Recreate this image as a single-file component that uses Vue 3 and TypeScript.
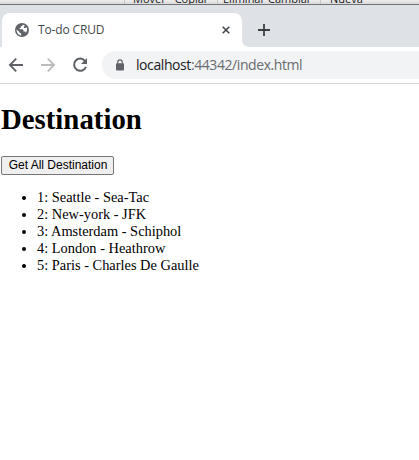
<script setup lang="ts">
interface Destination {
  id: number
  city: string
  airport: string
}

const destinations: Destination[] = [
  { id: 1, city: 'Seattle', airport: 'Sea-Tac' },
  { id: 2, city: 'New-york', airport: 'JFK' },
  { id: 3, city: 'Amsterdam', airport: 'Schiphol' },
  { id: 4, city: 'London', airport: 'Heathrow' },
  { id: 5, city: 'Paris', airport: 'Charles De Gaulle' },
]
</script>

<template>
  <div class="window">
    <div class="ribbon">
      <div class="group first"></div>
      <div class="group second"><span>Mover</span><span>Copiar</span></div>
      <div class="group third"><span>Eliminar</span><span>Cambiar</span></div>
      <div class="group fourth"><span>Nueva</span></div>
    </div>
    <div class="tabs">
      <div class="tab">
        <svg class="globe" viewBox="0 0 14 14">
          <circle cx="7" cy="7" r="7" fill="#5f6368" />
          <path d="M7.8 1.7 C7.6 2.6 7.2 3.1 6 3.2 L5.9 4.6 L4.6 5.1 L4.7 6.2 L7.6 6.3 L8.5 7.2 L8.5 8.4 L10.2 8.6 L10.8 9.7 C12.4 7.9 12.5 5.5 11.5 4 L10.6 5 L8.9 4.9 L8.8 3.7 L10 2.7 C9.3 2 8.5 1.8 7.8 1.7Z M1.6 6.5 L4.5 9 L4.6 10 L6 10.2 L6.1 12.4 C3.4 12 1.4 9.6 1.6 6.5Z" fill="#fff" />
        </svg>
        <span class="title">To-do CRUD</span>
        <svg class="close" viewBox="0 0 8 8"><path d="M.7 .7L7.3 7.3M7.3 .7L.7 7.3" stroke="#45494d" stroke-width="1.6" /></svg>
      </div>
      <svg class="curve" viewBox="0 0 8 8"><path d="M0 0Q0 8 8 8H0Z" fill="#fff" /></svg>
      <svg class="plus" viewBox="0 0 12 12"><path d="M6 0V12M0 6H12" stroke="#3c4043" stroke-width="1.8" /></svg>
    </div>
    <div class="toolbar">
      <svg class="nav" viewBox="0 0 16 16"><path d="M15 8H2M8.2 1.7L1.9 8L8.2 14.3" fill="none" stroke="#5f6368" stroke-width="1.9" /></svg>
      <svg class="nav" viewBox="0 0 16 16"><path d="M1 8H14M7.8 1.7L14.1 8L7.8 14.3" fill="none" stroke="#babcbe" stroke-width="1.9" /></svg>
      <svg class="nav" viewBox="0 0 16 16">
        <path d="M13.2 4.2A6.1 6.1 0 1 0 13.9 9.8" fill="none" stroke="#5f6368" stroke-width="2" />
        <path d="M15 1V7H9Z" fill="#5f6368" />
      </svg>
      <div class="address">
        <svg class="lock" viewBox="0 0 8 12">
          <path d="M1.8 5V3A2.2 2.2 0 0 1 6.2 3V5" fill="none" stroke="#5f6368" stroke-width="1.2" />
          <rect y="4.3" width="8" height="7.2" rx="1" fill="#5f6368" />
        </svg>
        <span class="url">localhost<span class="path">:44342/index.html</span></span>
      </div>
    </div>
    <main>
      <h1>Destination</h1>
      <button type="button">Get All Destination</button>
      <ul>
        <li v-for="d in destinations" :key="d.id">{{ d.id }}: {{ d.city }} - {{ d.airport }}</li>
      </ul>
    </main>
  </div>
</template>

<style>
body {
  margin: 0;
  background: #fff;
}
</style>

<style scoped>
.window {
  height: 460px;
  overflow: hidden;
  background: #fff;
}
svg {
  display: block;
  flex: none;
}
.ribbon {
  box-sizing: border-box;
  height: 5px;
  display: flex;
  overflow: hidden;
  background: linear-gradient(#eeeeef, #d8d9da);
  border-bottom: 1px solid #707275;
  font: 11px/12px "Open Sans", sans-serif;
  color: #202020;
}
.group {
  box-sizing: border-box;
  display: flex;
  flex: none;
  height: 4px;
  border-right: 1px solid #c5c6c8;
}
.group span {
  display: block;
  margin-top: -7px;
  white-space: nowrap;
}
.first { width: 125px; }
.second { width: 93px; padding-left: 8px; gap: 9px; }
.third { width: 103px; padding-left: 5px; gap: 3px; }
.fourth { width: 98px; padding-left: 9px; border: 0; }
.tabs {
  box-sizing: border-box;
  height: 42px;
  padding: 8px 0 0 2px;
  display: flex;
  background: #dee1e6;
}
.tab {
  box-sizing: border-box;
  width: 240px;
  height: 34px;
  padding: 0 12px 0 13px;
  display: flex;
  align-items: center;
  background: #fff;
  border-radius: 8px 8px 0 0;
}
.globe { width: 14px; height: 14px; }
.title {
  margin-left: 9px;
  font: 12px/16px "Open Sans", sans-serif;
  letter-spacing: -.15px;
  color: #45494d;
}
.close { width: 8px; height: 8px; margin-left: auto; }
.curve { width: 8px; height: 8px; align-self: flex-end; }
.plus { width: 12px; height: 12px; margin: 11px 0 0 8px; }
.toolbar {
  box-sizing: border-box;
  height: 37px;
  padding: 4px 0 4px 8px;
  display: flex;
  align-items: center;
  background: #fff;
  border-bottom: 1px solid #d5d7da;
}
.nav { width: 16px; height: 16px; margin-right: 16px; }
.address {
  box-sizing: border-box;
  height: 28px;
  flex: 1;
  margin-left: -2px;
  padding-left: 14px;
  display: flex;
  align-items: center;
  background: #f1f3f4;
  border-radius: 14px 0 0 14px;
}
.lock { width: 8px; height: 12px; }
.url {
  margin-left: 12px;
  font: 14px/20px "Open Sans", sans-serif;
  letter-spacing: -.42px;
  color: #202124;
}
.path { color: #686c70; }
main {
  padding: 19px 0 0 1px;
  font: 14.4px/17px "Liberation Serif", serif;
  color: #000;
}
h1 {
  margin: 0 0 20px;
  font-size: 28.8px;
  line-height: 33px;
}
button {
  display: block;
  box-sizing: border-box;
  width: 113px;
  height: 19px;
  padding: 0 0 0 1px;
  border: 1px solid #767676;
  border-radius: 2px;
  background: #efefef;
  font: 12px/15px "Liberation Sans", sans-serif;
  color: #000;
  white-space: nowrap;
}
ul {
  margin: 14px 0 0;
  padding-left: 36px;
}
</style>
